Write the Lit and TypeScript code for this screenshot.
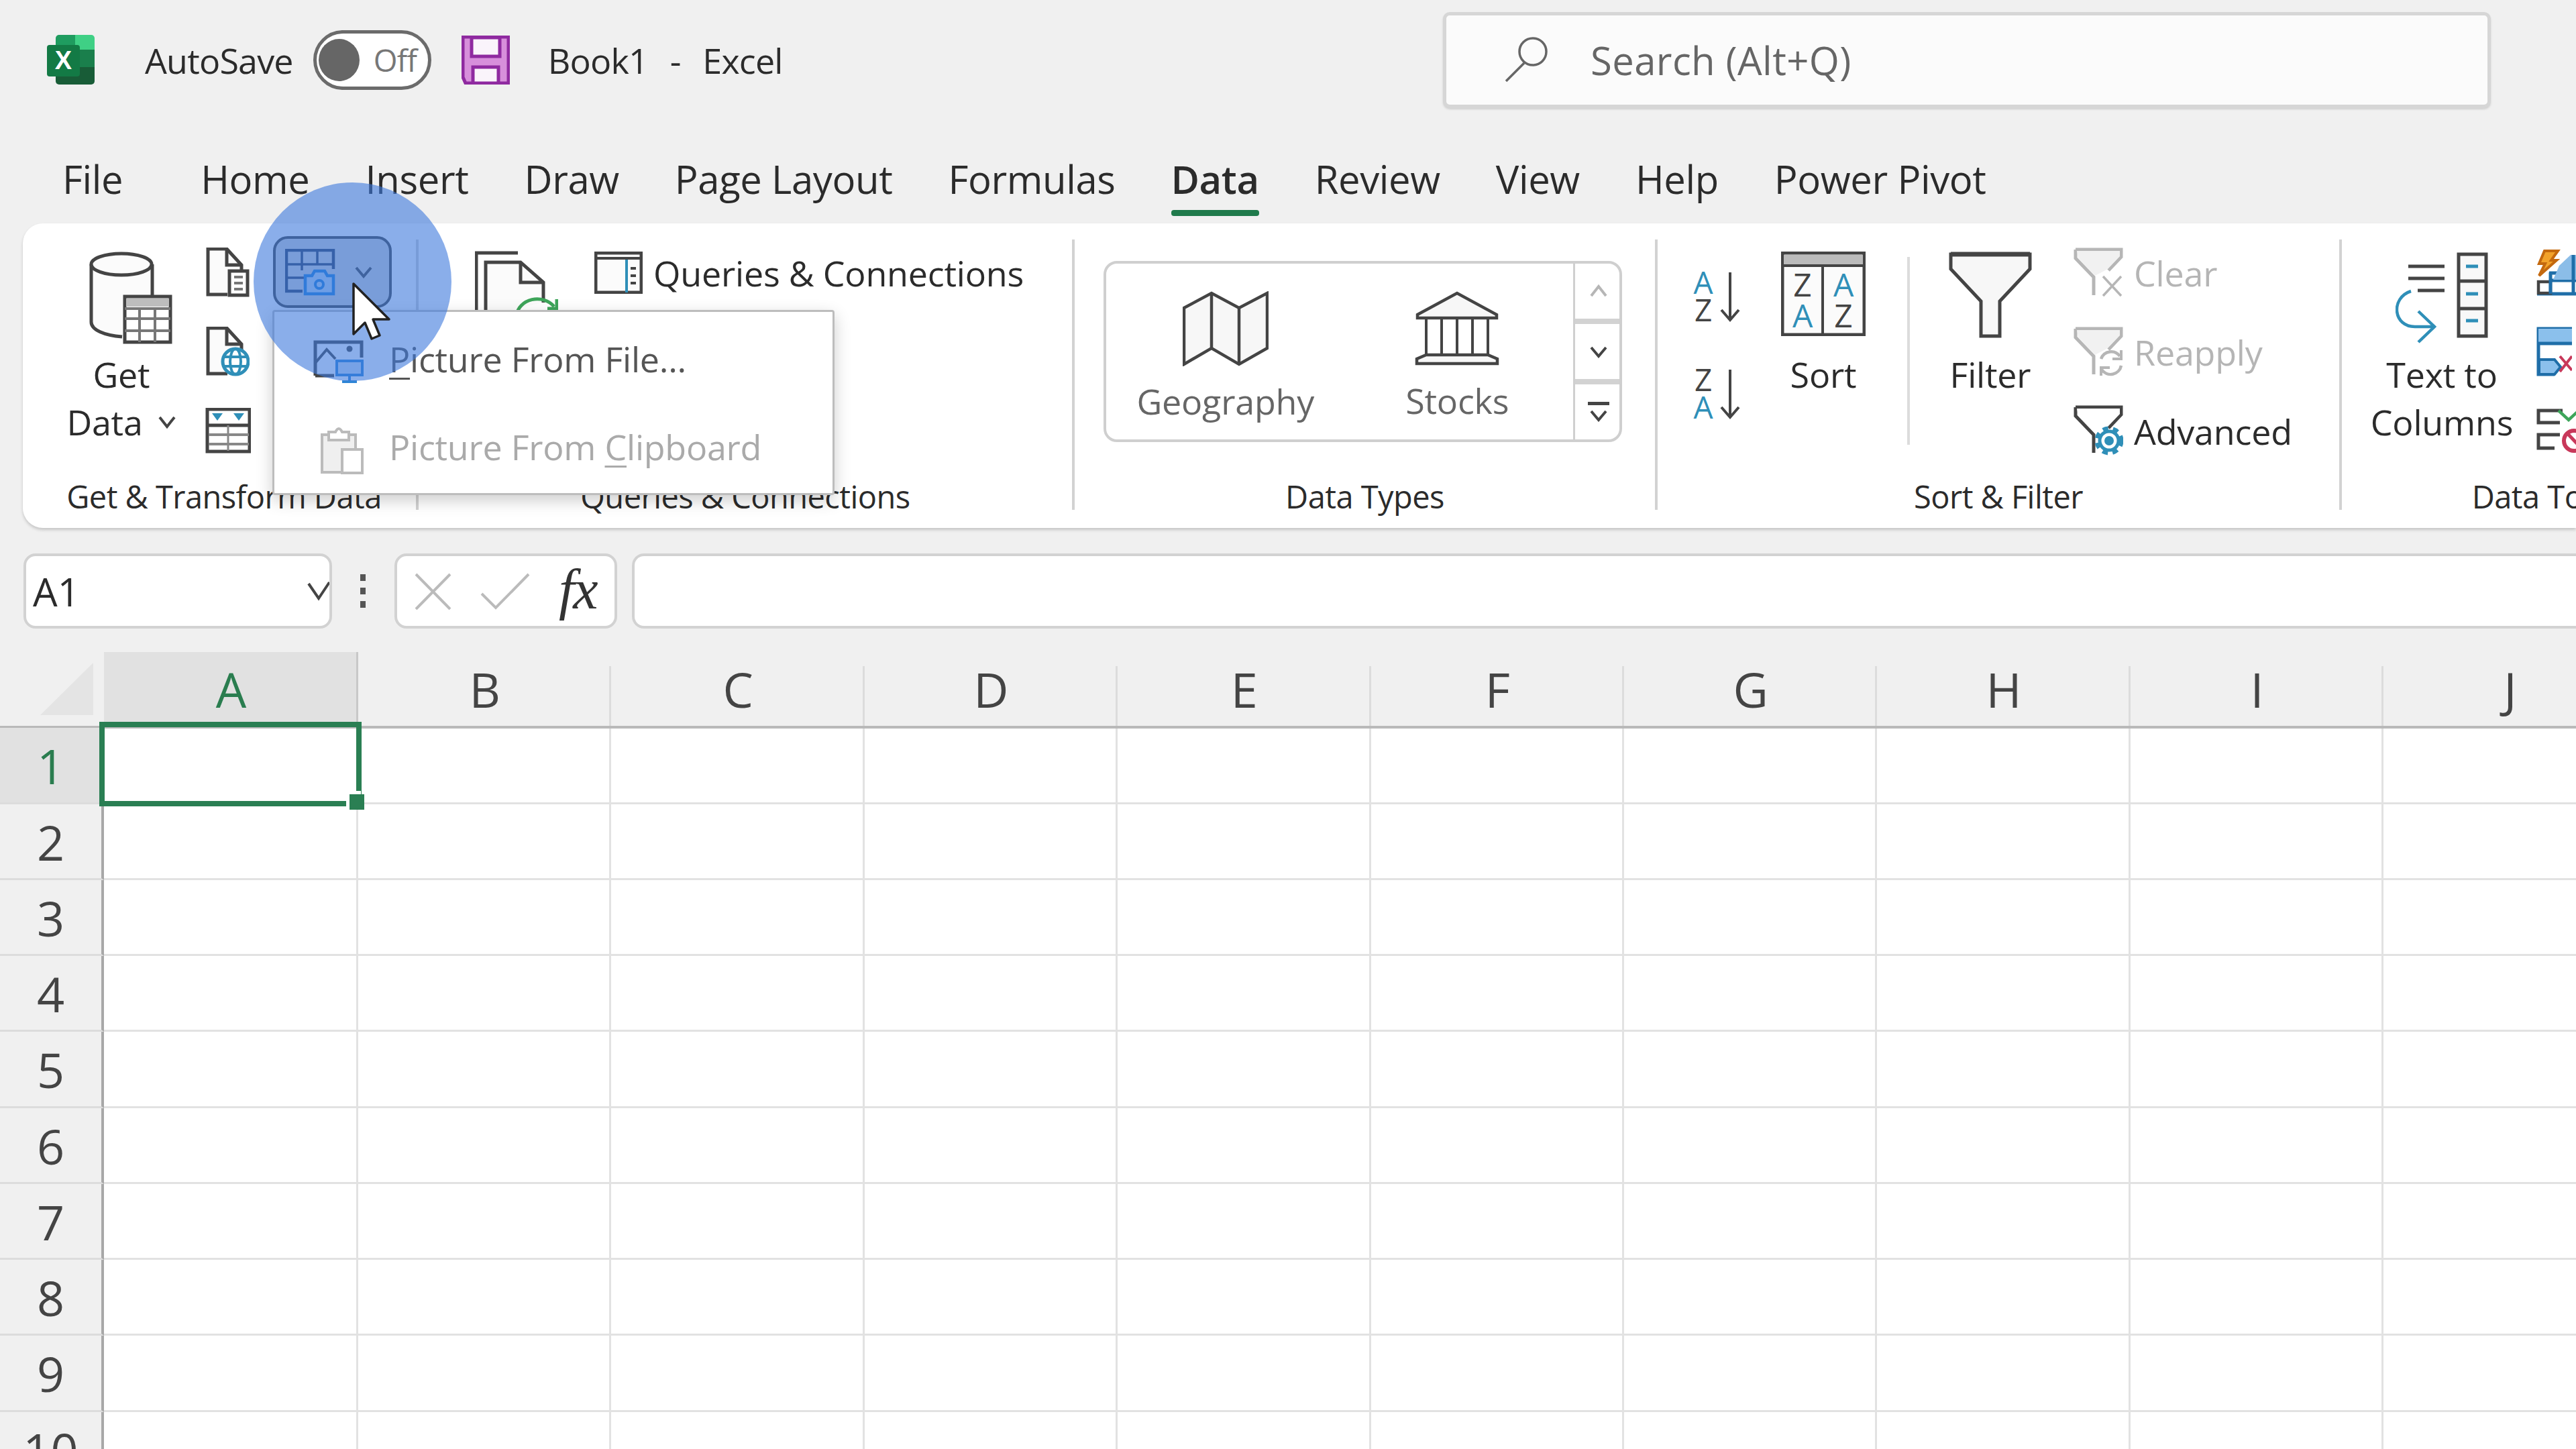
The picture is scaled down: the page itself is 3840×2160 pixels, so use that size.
import { LitElement, html, css, svg } from 'lit';
import { customElement } from 'lit/decorators.js';

// every icon is drawn in page coordinates, the viewBox just cuts out its box
const icon = (x: number, y: number, w: number, h: number, body: unknown) => html`
  <svg class="ico" viewBox="${x} ${y} ${w} ${h}" width=${w} height=${h} fill="none">${body}</svg>
`;

const DARK = '#444';
const TEAL = '#2f8fb8';
const GREY = '#b6b6b6';

const excelLogo = icon(70, 52, 72, 75, svg`
  <path d="M88 52h33v22H83V57a5 5 0 0 1 5-5z" fill="#1f9c5f"/>
  <path d="M112 52h24a5 5 0 0 1 5 5v17h-29z" fill="#3fd085"/>
  <rect x="83" y="74" width="58" height="26" fill="#1a7f4c"/>
  <path d="M83 100h58v21a5 5 0 0 1-5 5H88a5 5 0 0 1-5-5z" fill="#185c37"/>
  <rect x="70" y="67" width="49" height="47" rx="4" fill="#137a45"/>
  <text x="94" y="103" text-anchor="middle" class="xl">X</text>
`);

const saveIcon = icon(688, 54, 72, 73, svg`
  <path d="M690 56h68v69h-64l-4-9z" fill="#d78fdb" stroke="#8f2aa0" stroke-width="5"/>
  <rect x="703" y="57" width="42" height="28" fill="#faf4fb" stroke="#8f2aa0" stroke-width="5"/>
  <rect x="705" y="101" width="38" height="24" fill="#faf4fb" stroke="#8f2aa0" stroke-width="5"/>
`);

const searchIcon = icon(2245, 55, 66, 70, svg`
  <circle cx="2287" cy="78" r="20" stroke="#666" stroke-width="3.5"/>
  <path d="M2274 95L2247 122" stroke="#666" stroke-width="3.5"/>
`);

const getDataIcon = icon(132, 373, 126, 139, svg`
  <path d="M136 392v86c0 12 20 20 46 22h6v-60h38v-48" fill="#fbfbfb"/>
  <path d="M182 500c-26-2-46-10-46-22v-86M227 392v46" stroke=${DARK} stroke-width="5"/>
  <ellipse cx="181" cy="392" rx="45" ry="16" fill="#fbfbfb" stroke=${DARK} stroke-width="5"/>
  <rect x="186" y="440" width="68" height="68" fill="#fff" stroke=${DARK} stroke-width="5"/>
  <rect x="188" y="443" width="64" height="12" fill="#bdbdbd"/>
  <path d="M186 458h68M186 473h68M186 491h68" stroke="#777" stroke-width="4"/>
  <path d="M208 458v50M231 458v50" stroke="#777" stroke-width="4"/>
`);

const docShape = (dy: number) => svg`
  <path d="M346 ${440 + dy}h-29v-68h28l22 24v10" stroke=${DARK} stroke-width="5" fill="#fbfbfb"/>
  <path d="M345 ${372 + dy}v24h22" stroke=${DARK} stroke-width="5"/>
`;

const docListIcon = icon(313, 370, 66, 74, svg`
  ${docShape(0)}
  <rect x="349" y="405" width="27" height="36" fill="#fff" stroke=${DARK} stroke-width="5"/>
  <path d="M356 414h13M356 423h13M356 432h13" stroke="#777" stroke-width="4"/>
`);

const docGlobeIcon = icon(313, 488, 66, 74, svg`
  ${docShape(118)}
  <circle cx="358" cy="540" r="19" fill="#fff" stroke=${TEAL} stroke-width="5"/>
  <ellipse cx="358" cy="540" rx="8" ry="19" stroke=${TEAL} stroke-width="4"/>
  <path d="M341 533h34M341 547h34" stroke=${TEAL} stroke-width="4"/>
`);

const tableFilterIcon = icon(305, 606, 68, 68, svg`
  <rect x="308" y="608" width="63" height="63" fill="#fff" stroke=${DARK} stroke-width="5"/>
  <path d="M308 632h63" stroke=${DARK} stroke-width="5"/>
  <path d="M315 614h16l-8 11zM347 614h16l-8 11z" fill=${TEAL}/>
  <path d="M310 646h60M310 660h60" stroke="#888" stroke-width="4"/>
  <path d="M339 632v38" stroke="#888" stroke-width="3"/>
`);

const cameraTableIcon = icon(422, 374, 76, 70, svg`
  <path d="M448 437h-24v-61h70v28" stroke="#2f3f5f" stroke-width="4.5"/>
  <path d="M424 397h70M424 417h26M447 376v30M470 376v22" stroke="#2f3f5f" stroke-width="3.5"/>
  <path d="M452 414h10l4-7h15l4 7h9v27h-42z" fill="#bcd6f2" stroke="#1f7fd6" stroke-width="4.5"/>
  <circle cx="473" cy="427" r="6" stroke="#1f7fd6" stroke-width="4"/>
`);

const chevron = (x: number, y: number, w: number, h: number, color: string, sw = 4) => icon(x - 3, y - 3, w + 6, h + 6, svg`
  <path d="M${x} ${y}L${x + w / 2} ${y + h}L${x + w} ${y}" stroke=${color} stroke-width=${sw}/>
`);

const chevronUp = icon(2372, 425, 28, 20, svg`
  <path d="M2375 442L2386 428L2397 442" stroke=${GREY} stroke-width="4"/>
`);

const connectionsIcon = icon(706, 373, 124, 100, svg`
  <path d="M708 470V377h62" stroke=${DARK} stroke-width="5"/>
  <path d="M722 470V391h52l34 30v30" stroke=${DARK} stroke-width="5" fill="#fbfbfb"/>
  <path d="M774 391v30h34" stroke=${DARK} stroke-width="5"/>
  <path d="M768 470a31 27 0 0 1 56-13" stroke="#3ea55a" stroke-width="5"/>
  <path d="M828 446v14h-14" stroke="#3ea55a" stroke-width="5"/>
`);

const queriesIcon = icon(884, 375, 72, 63, svg`
  <rect x="886" y="377" width="68" height="59" fill="#fbfbfb" stroke=${DARK} stroke-width="5"/>
  <path d="M886 385h68" stroke=${DARK} stroke-width="4"/>
  <path d="M932 387v49" stroke=${TEAL} stroke-width="4"/>
  <path d="M938 400h8M938 411h8M938 422h8" stroke=${DARK} stroke-width="4"/>
`);

const geographyIcon = icon(1762, 432, 128, 112, svg`
  <path d="M1764 457L1805 435L1846 457L1888 435V517L1846 541L1805 517L1764 541Z" fill="#f7f7f7" stroke=${DARK} stroke-width="4.5"/>
  <path d="M1805 435V517M1846 457V541" stroke=${DARK} stroke-width="4.5"/>
`);

const stocksIcon = icon(2108, 433, 126, 111, svg`
  <path d="M2112 468L2171 436L2230 468V473H2112Z" fill="#f7f7f7" stroke=${DARK} stroke-width="4.5"/>
  <path d="M2125 474V527M2148 474V527M2171 474V527M2194 474V527M2217 474V527" stroke=${DARK} stroke-width="4"/>
  <path d="M2125 528H2217L2231 534V541H2111V534Z" fill="#f7f7f7" stroke=${DARK} stroke-width="4.5"/>
`);

const sortArrow = (y: number) => svg`
  <path d="M2579 ${y}V${y + 70}M2566 ${y + 56}L2579 ${y + 71}L2592 ${y + 56}" stroke=${DARK} stroke-width="4"/>
`;

const sortAZIcon = icon(2521, 404, 74, 78, svg`
  <text x="2539" y="438" class="az teal">A</text>
  <text x="2539" y="479" class="az dark">Z</text>
  ${sortArrow(406)}
`);

const sortZAIcon = icon(2521, 549, 74, 78, svg`
  <text x="2539" y="583" class="az dark">Z</text>
  <text x="2539" y="624" class="az teal">A</text>
  ${sortArrow(551)}
`);

const sortBigIcon = icon(2655, 375, 126, 126, svg`
  <rect x="2657" y="377" width="122" height="122" fill="#fbfbfb" stroke=${DARK} stroke-width="5"/>
  <rect x="2659" y="380" width="118" height="14" fill="#bbb"/>
  <path d="M2657 396H2779" stroke=${DARK} stroke-width="4"/>
  <path d="M2717 396V499" stroke=${DARK} stroke-width="4"/>
  <text x="2687" y="442" class="az2 dark">Z</text>
  <text x="2687" y="488" class="az2 teal">A</text>
  <text x="2748" y="442" class="az2 teal">A</text>
  <text x="2748" y="488" class="az2 dark">Z</text>
`);

const filterIcon = icon(2903, 373, 124, 130, svg`
  <path d="M2906 377H3024V399L2979 447V499H2951V447L2906 399Z" fill="#f7f7f7" stroke=${DARK} stroke-width="5"/>
  <path d="M2906 377H3024" stroke=${DARK} stroke-width="7"/>
`);

const miniFunnel = (dy: number, color: string, fill: string) => svg`
  <path d="M3092 ${373 + dy}H3160V${384 + dy}L3141 ${404 + dy}" stroke=${color} stroke-width="5"/>
  <path d="M3092 ${373 + dy}V${386 + dy}L3119 ${414 + dy}V${441 + dy}" stroke=${color} stroke-width="5"/>
  <path d="M3094 ${375 + dy}H3158V${383 + dy}L3140 ${402 + dy}L3121 ${412 + dy}L3096 ${386 + dy}Z" fill=${fill}/>
`;

const clearIcon = icon(3089, 370, 74, 74, svg`
  ${miniFunnel(0, GREY, '#f1f1f1')}
  <path d="M3133 413L3160 442M3160 413L3133 442" stroke=${GREY} stroke-width="3.5"/>
`);

const reapplyIcon = icon(3089, 487, 74, 74, svg`
  ${miniFunnel(117, GREY, '#f1f1f1')}
  <path d="M3130 535a16 16 0 0 1 28-4M3160 545a16 16 0 0 1-29 6" stroke=${GREY} stroke-width="4.5"/>
  <path d="M3160 522v13h-13M3130 560v-12h13" stroke=${GREY} stroke-width="4"/>
`);

const advancedIcon = icon(3089, 604, 74, 76, svg`
  ${miniFunnel(234, DARK, '#fff')}
  <circle cx="3142" cy="657" r="14" fill="#fff" stroke=${TEAL} stroke-width="5"/>
  <circle cx="3142" cy="657" r="18" stroke=${TEAL} stroke-width="7" stroke-dasharray="8 7"/>
  <circle cx="3142" cy="657" r="7" fill=${TEAL}/>
`);

const textColumnsIcon = icon(3566, 373, 138, 138, svg`
  <path d="M3585 395H3639M3585 413H3639M3599 431H3639" stroke=${DARK} stroke-width="5"/>
  <rect x="3660" y="377" width="41" height="122" fill="#f8f8f8" stroke=${DARK} stroke-width="5"/>
  <path d="M3660 417H3701M3660 458H3701" stroke=${DARK} stroke-width="5"/>
  <path d="M3671 395H3689M3671 436H3689M3671 476H3689" stroke=${TEAL} stroke-width="5"/>
  <path d="M3589 432C3558 442 3562 486 3596 485H3624" stroke=${TEAL} stroke-width="4.5"/>
  <path d="M3600 462L3624 485L3600 508" stroke=${TEAL} stroke-width="4.5"/>
`);

const flashFillIcon = icon(3780, 368, 62, 72, svg`
  <path d="M3800 405h40M3800 416h40M3782 436h58" stroke="#1f6ea8" stroke-width="5"/>
  <path d="M3815 394L3832 378H3840V415H3806Z" fill="#8bbde8"/>
  <path d="M3784 418H3802V435H3784Z" stroke=${DARK} stroke-width="4.5"/>
  <path d="M3802 404V436M3836 378V436" stroke="#1f6ea8" stroke-width="5"/>
  <path d="M3793 372H3813L3803 386H3811L3785 409L3794 391H3785Z" fill="#f2a22a" stroke="#c4690f" stroke-width="4"/>
`);

const removeDupIcon = icon(3788, 486, 54, 76, svg`
  <path d="M3842 490H3792V558H3816" stroke="#1f6ea8" stroke-width="5"/>
  <rect x="3792" y="490" width="50" height="20" fill="#8bc0ec"/>
  <path d="M3792 512H3842" stroke="#1f6ea8" stroke-width="5"/>
  <path d="M3793 536H3816L3825 547L3816 558H3793Z" fill="#8bc0ec" stroke="#1f6ea8" stroke-width="4"/>
  <path d="M3824 531L3842 552M3842 531L3824 554" stroke="#c8385a" stroke-width="4"/>
`);

const validationIcon = icon(3780, 612, 62, 70, svg`
  <path d="M3820 617H3784V635H3816M3816 653H3784V673H3808" stroke=${DARK} stroke-width="5"/>
  <path d="M3814 617L3829 631L3844 617" stroke="#3ea55a" stroke-width="4.5"/>
  <circle cx="3837" cy="662" r="15" stroke="#c8385a" stroke-width="6"/>
  <path d="M3827 651L3848 673" stroke="#c8385a" stroke-width="5"/>
`);

const pictureIcon = icon(466, 505, 78, 66, svg`
  <path d="M470 559V509H539V532" stroke=${DARK} stroke-width="5"/>
  <path d="M470 540L487 520L500 534" stroke=${DARK} stroke-width="4"/>
  <path d="M470 559H498" stroke=${DARK} stroke-width="5"/>
  <circle cx="521" cy="519" r="4.5" fill=${DARK}/>
  <rect x="502" y="537" width="38" height="21" fill="#cfe0f4" stroke="#2f86d6" stroke-width="4"/>
  <path d="M521 558V567M510 568H532" stroke="#2f86d6" stroke-width="4"/>
`);

const clipboardIcon = icon(476, 626, 68, 76, svg`
  <path d="M508 698H480V642H530V662" fill="#efefef" stroke="#bbb" stroke-width="4"/>
  <path d="M490 650V638H500Q505 628 510 638H520V650Z" fill="#fff" stroke="#bbb" stroke-width="4"/>
  <rect x="510" y="664" width="30" height="35" fill="#fff" stroke="#bbb" stroke-width="4"/>
`);

const tabs = ['Home', 'Insert', 'Draw', 'Page Layout', 'Formulas', 'Data', 'Review', 'View', 'Help', 'Power Pivot'];
const columns = ['A', 'B', 'C', 'D', 'E', 'F', 'G', 'H', 'I', 'J'];
const rows = [1, 2, 3, 4, 5, 6, 7, 8, 9, 10];

@customElement('app-root')
export class AppRoot extends LitElement {
  static styles = css`
    :host {
      display: block;
      position: relative;
      width: 3840px;
      height: 2160px;
      overflow: hidden;
      background: #f0f0f0;
      color: #2b2b2b;
      font-family: "Open Sans", "Noto Sans", sans-serif;
    }
    .ico { display: block; flex: none; }
    .xl { font: 700 38px "Liberation Sans", sans-serif; fill: #fff; }
    .az { font: 400 46px "Open Sans", sans-serif; text-anchor: middle; }
    .az2 { font: 400 48px "Open Sans", sans-serif; text-anchor: middle; }
    .teal { fill: #2f8fb8; }
    .dark { fill: #444; }

    /* title bar */
    .titlebar {
      display: flex;
      align-items: center;
      height: 178px;
      padding-left: 70px;
      font-size: 52px;
      letter-spacing: -0.8px;
    }
    .autosave { margin-left: 74px; }
    .toggle {
      display: flex;
      align-items: center;
      box-sizing: border-box;
      width: 176px;
      height: 89px;
      margin-left: 30px;
      padding-left: 3px;
      border: 5px solid #6b6b6b;
      border-radius: 45px;
      background: #fff;
      color: #777;
      font-size: 46px;
    }
    .knob {
      width: 61px;
      height: 63px;
      margin-right: 21px;
      border-radius: 50%;
      background: #666;
    }
    .save { margin-left: 45px; margin-right: 57px; }
    .doc-title { word-spacing: 20px; }
    .search {
      display: flex;
      align-items: center;
      box-sizing: border-box;
      width: 1562px;
      height: 143px;
      margin-left: auto;
      margin-right: 127px;
      padding-left: 87px;
      gap: 62px;
      border: 5px solid #d6d6d6;
      border-radius: 10px;
      background: #fbfbfb;
      box-shadow: 0 2px 3px #d0d0d0;
      color: #666;
      font-size: 58px;
      letter-spacing: 0.4px;
    }

    /* tabs */
    .tabs {
      display: flex;
      align-items: flex-start;
      gap: 83px;
      height: 155px;
      padding-left: 93px;
      padding-top: 51px;
      box-sizing: border-box;
      font-size: 58px;
      letter-spacing: -0.4px;
      line-height: 76px;
    }
    .tab { position: relative; height: 93px; }
    .tab.first { margin-right: 33px; }
    .tab.on { font-weight: 600; }
    .tab.on::after {
      content: "";
      position: absolute;
      left: 0;
      right: 0;
      bottom: 0;
      height: 9px;
      border-radius: 4px;
      background: #1f7a4b;
    }

    /* ribbon */
    .ribbon {
      display: flex;
      height: 454px;
      margin-left: 34px;
      border-radius: 30px 0 0 30px;
      background: #fff;
      box-shadow: 0 3px 4px #c6c6c6;
      overflow: hidden;
      font-size: 52px;
      letter-spacing: -0.2px;
    }
    .group { display: flex; flex-direction: column; flex: none; }
    .g1 { width: 586px; }
    .g2 { width: 974px; }
    .g3 { width: 865px; }
    .g4 { width: 1016px; }
    .g5 { width: 614px; }
    .body { display: flex; flex: 1; min-height: 0; }
    .glabel {
      height: 72px;
      margin-bottom: 11px;
      text-align: center;
      font-size: 47px;
      line-height: 72px;
      letter-spacing: -0.55px;
    }
    .g1 .glabel { padding-left: 14px; }
    .sep { flex: none; width: 4px; height: 403px; margin-top: 24px; background: #d2d2d2; }
    .inner-sep { flex: none; width: 4px; height: 280px; margin: 50px 0 0 62px; background: #dcdcdc; }

    .big { display: flex; flex-direction: column; align-items: center; flex: none; padding-top: 42px; text-align: center; line-height: 71px; }
    .slot { height: 135px; margin-bottom: 12px; }
    .get { width: 160px; margin-left: 67px; }
    .get .slot { margin-left: 28px; }
    .data-line { display: flex; align-items: center; gap: 22px; }
    .stack { display: flex; flex-direction: column; flex: none; gap: 46px; padding-top: 37px; }
    .row { display: flex; align-items: center; gap: 16px; height: 72px; white-space: nowrap; }
    .off { color: #b5b5b5; }

    .s1 { margin-left: 45px; width: 72px; }
    .split {
      display: flex;
      align-items: center;
      flex: none;
      box-sizing: border-box;
      width: 177px;
      height: 107px;
      margin: 19px 0 0 29px;
      padding-left: 14px;
      gap: 27px;
      border: 4px solid #444;
      border-radius: 22px;
      background: #d4d4d4;
    }
    .conn { margin: 40px 0 0 84px; }
    .s2 { margin-left: 54px; }

    /* data types gallery */
    .gallery {
      display: flex;
      flex: none;
      box-sizing: border-box;
      width: 773px;
      height: 270px;
      margin: 56px 0 0 43px;
      padding-left: 5px;
      border: 4px solid #cfcfcf;
      border-radius: 20px;
      overflow: hidden;
      color: #666;
    }
    .gal-item {
      display: flex;
      flex-direction: column;
      align-items: center;
      width: 347px;
      padding-top: 41px;
    }
    .gal-item .ico { margin-bottom: 16px; }
    .gal-side { display: flex; flex-direction: column; flex: none; width: 66px; border-left: 3px solid #cfcfcf; }
    .gal-btn { display: flex; flex-direction: column; align-items: center; justify-content: center; gap: 6px; flex: 1; padding-left: 4px; }
    .gal-btn + .gal-btn { border-top: 8px solid #d2d2d2; }
    .bar { width: 32px; height: 5px; background: #444; }

    .sort-col { display: flex; flex-direction: column; flex: none; gap: 67px; margin-left: 50px; padding-top: 71px; }
    .sort-big { width: 126px; margin-left: 60px; }
    .filter { width: 124px; margin-left: 58px; }
    .s4 { margin-left: 62px; }
    .ttc { width: 220px; margin-left: 39px; }
    .s5 { margin-left: 30px; }

    /* formula bar */
    .formula {
      display: flex;
      align-items: center;
      height: 112px;
      margin-top: 38px;
      margin-left: 35px;
    }
    .box {
      box-sizing: border-box;
      height: 112px;
      border: 4px solid #d2d2d2;
      border-radius: 18px;
      background: #fff;
    }
    .name {
      display: flex;
      align-items: center;
      justify-content: space-between;
      width: 460px;
      padding-left: 10px;
      overflow: hidden;
      font-size: 58px;
    }
    .dots {
      display: flex;
      flex-direction: column;
      gap: 10px;
      margin: 0 43px 0 42px;
    }
    .dots i { display: block; width: 8px; height: 10px; background: #555; }
    .fx-box {
      display: flex;
      align-items: center;
      width: 332px;
      padding-left: 25px;
      gap: 42px;
    }
    .fx { font: italic 400 84px "Liberation Serif", serif; color: #333; margin-top: -6px; letter-spacing: -2px; }
    .input { flex: 1; margin-left: 22px; border-radius: 18px 0 0 18px; border-right: 0; }

    /* sheet */
    .sheet { position: relative; margin-top: 35px; }
    .grid {
      display: grid;
      grid-template-columns: 155px 379px repeat(9, 377.4px);
      grid-auto-rows: 113.25px;
    }
    .head {
      position: relative;
      display: flex;
      align-items: center;
      justify-content: center;
      font-size: 72px;
      color: #444;
    }
    .col { height: 110px; border-bottom: 4px solid #b9b9b9; box-sizing: content-box; }
    .col::after {
      content: "";
      position: absolute;
      top: 21px;
      bottom: 0;
      right: 0;
      width: 3px;
      background: #dcdcdc;
    }
    .corner { height: 110px; border-bottom: 4px solid #b9b9b9; box-sizing: content-box; }
    .corner svg { position: absolute; left: 60px; top: 16px; }
    .head.sel { background: #e1e1e1; color: #2a7d4f; }
    .col.sel::after { top: 0; width: 3px; background: #c8c8c8; }
    .rowh { box-sizing: border-box; border-right: 4px solid #a8a8a8; border-bottom: 3px solid #dcdcdc; padding-top: 2px; }
    .cell { box-sizing: border-box; background: #fff; border-right: 3px solid #e2e2e2; border-bottom: 3px solid #e2e2e2; }
    .select {
      position: absolute;
      left: 148px;
      top: 104px;
      box-sizing: border-box;
      width: 391px;
      height: 126px;
      border: 8px solid #2a7f53;
    }
    .select i {
      position: absolute;
      right: -12px;
      bottom: -13px;
      width: 22px;
      height: 23px;
      background: #2a7f53;
      box-shadow: -5px -5px 0 #fff;
    }

    /* overlays */
    .menu {
      position: absolute;
      left: 406px;
      top: 462px;
      box-sizing: border-box;
      width: 838px;
      height: 276px;
      padding-top: 4px;
      border: 3px solid #bdbdbd;
      border-radius: 4px;
      background: #fff;
      box-shadow: 0 8px 24px rgba(0, 0, 0, 0.2);
      font-size: 52px;
      letter-spacing: -0.25px;
      color: #555;
    }
    .item { display: flex; align-items: center; height: 131px; white-space: nowrap; }
    .item .ico { margin: 8px 0 0 57px; }
    .item span { position: absolute; left: 171px; }
    .item.dim { color: #aaa; }
    .item.dim .ico { margin-left: 67px; }
    .item u { text-underline-offset: 8px; text-decoration-thickness: 3px; }
    .lens {
      position: absolute;
      left: 378px;
      top: 272px;
      width: 295px;
      height: 296px;
      border-radius: 50%;
      background: rgba(60, 120, 220, 0.6);
    }
    .cursor { position: absolute; left: 524px; top: 420px; }
  `;

  render() {
    return html`
      <div class="titlebar">
        ${excelLogo}
        <span class="autosave">AutoSave</span>
        <div class="toggle"><div class="knob"></div>Off</div>
        <div class="save">${saveIcon}</div>
        <span class="doc-title">Book1 - Excel</span>
        <div class="search">${searchIcon}<span>Search (Alt+Q)</span></div>
      </div>

      <div class="tabs">
        <div class="tab first">File</div>
        ${tabs.map((t) => html`<div class="tab ${t === 'Data' ? 'on' : ''}">${t}</div>`)}
      </div>

      <div class="ribbon">
        <div class="group g1">
          <div class="body">
            <div class="big get">
              <div class="slot">${getDataIcon}</div>
              <div>Get</div>
              <div class="data-line">Data ${chevron(232, 623, 22, 14, DARK)}</div>
            </div>
            <div class="stack s1">
              <div class="row">${docListIcon}</div>
              <div class="row">${docGlobeIcon}</div>
              <div class="row">${tableFilterIcon}</div>
            </div>
            <div class="split">${cameraTableIcon}${chevron(525, 402, 22, 13, DARK)}</div>
          </div>
          <div class="glabel">Get &amp; Transform Data</div>
        </div>
        <div class="sep"></div>

        <div class="group g2">
          <div class="body">
            <div class="conn">${connectionsIcon}</div>
            <div class="stack s2">
              <div class="row">${queriesIcon}<span>Queries &amp; Connections</span></div>
            </div>
          </div>
          <div class="glabel">Queries &amp; Connections</div>
        </div>
        <div class="sep"></div>

        <div class="group g3">
          <div class="body">
            <div class="gallery">
              <div class="gal-item">${geographyIcon}<span>Geography</span></div>
              <div class="gal-item">${stocksIcon}<span>Stocks</span></div>
              <div class="gal-side">
                <div class="gal-btn">${chevronUp}</div>
                <div class="gal-btn">${chevron(2375, 521, 22, 13, DARK)}</div>
                <div class="gal-btn"><div class="bar"></div>${chevron(2375, 610, 22, 13, DARK)}</div>
              </div>
            </div>
          </div>
          <div class="glabel">Data Types</div>
        </div>
        <div class="sep"></div>

        <div class="group g4">
          <div class="body">
            <div class="sort-col">${sortAZIcon}${sortZAIcon}</div>
            <div class="big sort-big"><div class="slot">${sortBigIcon}</div><div>Sort</div></div>
            <div class="inner-sep"></div>
            <div class="big filter"><div class="slot">${filterIcon}</div><div>Filter</div></div>
            <div class="stack s4">
              <div class="row off">${clearIcon}<span>Clear</span></div>
              <div class="row off">${reapplyIcon}<span>Reapply</span></div>
              <div class="row">${advancedIcon}<span>Advanced</span></div>
            </div>
          </div>
          <div class="glabel">Sort &amp; Filter</div>
        </div>
        <div class="sep"></div>

        <div class="group g5">
          <div class="body">
            <div class="big ttc">
              <div class="slot">${textColumnsIcon}</div>
              <div>Text to</div>
              <div>Columns</div>
            </div>
            <div class="stack s5">
              <div class="row">${flashFillIcon}</div>
              <div class="row">${removeDupIcon}</div>
              <div class="row">${validationIcon}</div>
            </div>
          </div>
          <div class="glabel">Data Tools</div>
        </div>
      </div>

      <div class="formula">
        <div class="box name">A1 ${icon(455, 872, 34, 30, svg`<path d="M458 876L473 898L489 874" stroke="#444" stroke-width="4"/>`)}</div>
        <div class="dots"><i></i><i></i><i></i></div>
        <div class="box fx-box">
          ${icon(617, 853, 56, 56, svg`<path d="M620 856L671 908M671 856L620 908" stroke="#bbb" stroke-width="4"/>`)}
          ${icon(715, 853, 76, 56, svg`<path d="M718 885L739 906L788 856" stroke="#bbb" stroke-width="4"/>`)}
          <span class="fx">fx</span>
        </div>
        <div class="box input"></div>
      </div>

      <div class="sheet">
        <div class="grid">
          <div class="head corner">
            <svg width="80" height="80" viewBox="0 0 80 80"><path d="M79 0V78H0Z" fill="#e4e4e4"/></svg>
          </div>
          ${columns.map((c) => html`<div class="head col ${c === 'A' ? 'sel' : ''}">${c}</div>`)}
          ${rows.map((r) => html`
            <div class="head rowh ${r === 1 ? 'sel' : ''}">${r}</div>
            ${columns.map(() => html`<div class="cell"></div>`)}
          `)}
        </div>
        <div class="select"><i></i></div>
      </div>

      <div class="menu">
        <div class="item">${pictureIcon}<span><u>P</u>icture From File...</span></div>
        <div class="item dim">${clipboardIcon}<span>Picture From <u>C</u>lipboard</span></div>
      </div>
      <div class="lens"></div>
      <svg class="cursor" width="62" height="92" viewBox="524 420 62 92">
        <path d="M527 423V498L544 481L554 505L566 500L556 476H580Z" fill="#fff" stroke="#222" stroke-width="3.5" stroke-linejoin="round"/>
      </svg>
    `;
  }
}
